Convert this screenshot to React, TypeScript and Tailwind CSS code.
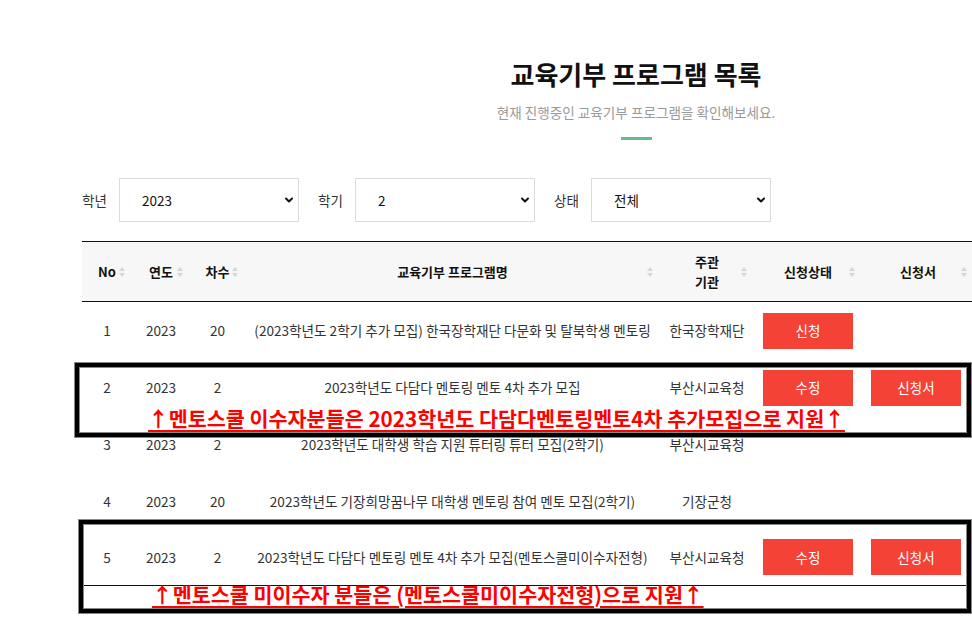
import { ChevronDown } from "lucide-react";

const ROWS = [
  {
    no: 1,
    year: 2023,
    round: 20,
    title: "(2023학년도 2학기 추가 모집) 한국장학재단 다문화 및 탈북학생 멘토링",
    org: "한국장학재단",
    status: "신청",
    form: false,
    h: "h-[57px]",
  },
  {
    no: 2,
    year: 2023,
    round: 2,
    title: "2023학년도 다담다 멘토링 멘토 4차 추가 모집",
    org: "부산시교육청",
    status: "수정",
    form: true,
    h: "h-[57px]",
  },
  {
    no: 3,
    year: 2023,
    round: 2,
    title: "2023학년도 대학생 학습 지원 튜터링 튜터 모집(2학기)",
    org: "부산시교육청",
    status: null,
    form: false,
    h: "h-[57px]",
  },
  {
    no: 4,
    year: 2023,
    round: 20,
    title: "2023학년도 기장희망꿈나무 대학생 멘토링 참여 멘토 모집(2학기)",
    org: "기장군청",
    status: null,
    form: false,
    h: "h-[56px]",
  },
  {
    no: 5,
    year: 2023,
    round: 2,
    title: "2023학년도 다담다 멘토링 멘토 4차 추가 모집(멘토스쿨미이수자전형)",
    org: "부산시교육청",
    status: "수정",
    form: true,
    h: "h-[56px]",
  },
];

const COLS = "grid grid-cols-[50px_58px_55px_415px_94px_108px_112px]";

function SortIcon() {
  return (
    <svg
      width="6"
      height="10"
      viewBox="0 0 6 10"
      className="absolute right-[7px] top-1/2 -translate-y-1/2"
    >
      <path d="M0 4 L3 0 L6 4 Z" fill="#d6d6d6" />
      <path d="M0 6 L3 10 L6 6 Z" fill="#d6d6d6" />
    </svg>
  );
}

function Th({ children }: { children: React.ReactNode }) {
  return (
    <div className="relative flex items-center justify-center text-center text-[13px] font-bold leading-[20px] text-[#111]">
      {children}
      <SortIcon />
    </div>
  );
}

function Filter({ label, value }: { label: string; value: string }) {
  return (
    <div className="flex items-center">
      <span className="w-[37px] text-[13.5px] text-[#333]">{label}</span>
      <div className="relative w-[180px] h-[44px] border border-[#dcdcdc] bg-white flex items-center pl-[22px] text-[13.5px] text-[#111]">
        {value}
        <ChevronDown
          className="absolute right-[3px] top-1/2 -translate-y-1/2 w-[12px] h-[12px] text-[#111]"
          strokeWidth={4}
        />
      </div>
    </div>
  );
}

function RedButton({ label }: { label: string }) {
  return (
    <div className="w-[90px] h-[36px] bg-[#f44336] text-white text-[13.5px] flex items-center justify-center">
      {label}
    </div>
  );
}

export default function App() {
  return (
    <div className="relative w-full h-[618px] overflow-hidden bg-white font-[family-name:'Noto_Sans_CJK_KR','Noto_Sans',sans-serif]">
      <div className="w-[1108px] ml-[82px]">
        {/* Title */}
        <div className="pt-[56px] flex flex-col items-center">
          <h1 className="text-[26px] leading-[36px] font-bold text-[#111]">
            교육기부 프로그램 목록
          </h1>
          <p className="mt-[10px] text-[13.6px] leading-[20px] text-[#9a9a9a]">
            현재 진행중인 교육기부 프로그램을 확인해보세요.
          </p>
          <div className="mt-[15px] w-[31px] h-[3px] bg-[#63be8c]" />
        </div>

        {/* Filters */}
        <div className="mt-[38px] flex items-center gap-[19px]">
          <Filter label="학년" value="2023" />
          <Filter label="학기" value="2" />
          <Filter label="상태" value="전체" />
        </div>

        {/* Table */}
        <div className="mt-[19px] border-b border-[#111]">
          <div className={`${COLS} h-[61px] border-y border-[#111] bg-[#f7f7f7]`}>
            <Th>No</Th>
            <Th>연도</Th>
            <Th>차수</Th>
            <Th>교육기부 프로그램명</Th>
            <Th>
              주관
              <br />
              기관
            </Th>
            <Th>신청상태</Th>
            <Th>신청서</Th>
          </div>
          {ROWS.map((r) => (
            <div
              key={r.no}
              className={`${COLS} ${r.h} items-center text-[13.6px] text-[#333] text-center whitespace-nowrap`}
            >
              <div>{r.no}</div>
              <div>{r.year}</div>
              <div>{r.round}</div>
              <div>{r.title}</div>
              <div>{r.org}</div>
              <div className="flex justify-center">
                {r.status && <RedButton label={r.status} />}
              </div>
              <div className="flex justify-center pr-[4px]">
                {r.form && <RedButton label="신청서" />}
              </div>
            </div>
          ))}
        </div>
      </div>

      {/* Annotations drawn over the table */}
      <div className="absolute left-[75px] top-[363px] w-[896px] h-[74px] border-4 border-black outline outline-1 outline-[#888] shadow-[inset_0_0_0_1px_#888]" />
      <div className="absolute left-[148px] top-[405px] text-[20.7px] leading-[26px] font-bold text-[#ff0000] underline underline-offset-[3px] whitespace-nowrap">
        ↑멘토스쿨 이수자분들은 2023학년도 다담다멘토링멘토4차 추가모집으로 지원↑
      </div>

      <div className="absolute left-[79px] top-[520px] w-[892px] h-[93px] border-4 border-black outline outline-1 outline-[#888] shadow-[inset_0_0_0_1px_#888]" />
      <div className="absolute left-[152px] top-[581px] text-[20.7px] leading-[26px] font-bold text-[#ff0000] underline underline-offset-[3px] whitespace-nowrap">
        ↑멘토스쿨 미이수자 분들은 (멘토스쿨미이수자전형)으로 지원↑
      </div>
    </div>
  );
}
